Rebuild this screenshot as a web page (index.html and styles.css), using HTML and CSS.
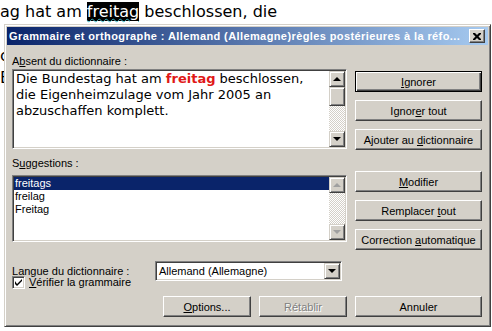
FILE: index.html
```html
<!DOCTYPE html>
<html lang="fr">
<head>
    <meta charset="UTF-8">
    <title>Grammaire et orthographe</title>
    <link rel="stylesheet" href="styles.css">
</head>
<body>
    <div class="doc">
        <p>ag hat am <span class="err">freitag</span> beschlossen, die</p>
        <div class="doc-rest">
            <p>&nbsp;</p>
            <p>c</p>
            <p>E</p>
        </div>
    </div>

    <div class="dialog">
        <div class="titlebar">
            <span class="title">Grammaire et orthographe : Allemand (Allemagne)règles postérieures à la réfo...</span>
            <span class="close">
                <svg width="8" height="7" viewBox="0 0 8 7"><path d="M0 0h2l2 2 2-2h2v1l-2.5 2.5 2.5 2.5v1h-2l-2-2-2 2h-2v-1l2.5-2.5-2.5-2.5z" fill="#000"/></svg>
            </span>
        </div>

        <div class="content">
            <div class="section first">
                <div class="left">
                    <div class="label">A<u>b</u>sent du dictionnaire :</div>
                    <div class="box sentence-box">
                        <div class="sentence">Die Bundestag hat am <b class="bad">freitag</b> beschlossen,<br>die Eigenheimzulage vom Jahr 2005 an<br>abzuschaffen komplett.</div>
                        <div class="scrollbar">
                            <div class="arrow up"></div>
                            <div class="thumb"></div>
                            <div class="track"></div>
                            <div class="arrow down"></div>
                        </div>
                    </div>
                </div>
                <div class="buttons">
                    <button class="btn default"><u>I</u>gnorer</button>
                    <button class="btn">Ignor<u>e</u>r tout</button>
                    <button class="btn">Ajouter au <u>d</u>ictionnaire</button>
                </div>
            </div>

            <div class="section second">
                <div class="left">
                    <div class="label">S<u>u</u>ggestions :</div>
                    <div class="box list-box">
                        <div class="list">
                            <div class="item selected">freitags</div>
                            <div class="item">freilag</div>
                            <div class="item">Freitag</div>
                        </div>
                        <div class="scrollbar">
                            <div class="arrow up off"></div>
                            <div class="track"></div>
                            <div class="arrow down off"></div>
                        </div>
                    </div>
                </div>
                <div class="buttons">
                    <button class="btn"><u>M</u>odifier</button>
                    <button class="btn">Remplacer <u>t</u>out</button>
                    <button class="btn">Correction <u>a</u>utomatique</button>
                </div>
            </div>

            <div class="lang-row">
                <span class="lang-label"><u>L</u>angue du dictionnaire :</span>
                <div class="select">
                    <span class="select-value">Allemand (Allemagne)</span>
                    <span class="drop"><span class="arrow down"></span></span>
                </div>
            </div>

            <div class="check-row">
                <span class="checkbox">
                    <svg width="7" height="7" viewBox="0 0 7 7"><path d="M0 2v3l2 2 5-5v-2h0l-5 5z" fill="#000"/></svg>
                </span>
                <span><u>V</u>érifier la grammaire</span>
            </div>

            <div class="footer">
                <button class="btn small"><u>O</u>ptions...</button>
                <button class="btn small" disabled>Rétablir</button>
                <button class="btn">Annuler</button>
            </div>
        </div>
    </div>
</body>
</html>
```

FILE: styles.css
```css
body {
    margin: 0;
    background: #fff;
    font-family: "DejaVu Sans", Verdana, sans-serif;
    overflow: hidden;
}
.doc {
    font-size: 16px;
    line-height: 22px;
    padding-top: 1px;
}
.doc p {
    margin: 0;
    white-space: nowrap;
}
.doc-rest {
    width: 4px;
    overflow: hidden;
}
.err {
    background: #000;
    color: #fff;
    text-decoration: underline wavy #3cb4c4;
    text-decoration-thickness: 1px;
}

/* dialog window */
.dialog {
    position: absolute;
    left: 4px;
    top: 24px;
    width: 487px;
    height: 303px;
    box-sizing: border-box;
    padding: 2px;
    background: #d4d0c8;
    border: 1px solid;
    border-color: #d4d0c8 #404040 #404040 #d4d0c8;
    box-shadow: inset 1px 1px #fff, inset -1px -1px #808080;
    font-family: "Liberation Sans", Arial, sans-serif;
    font-size: 11px;
    color: #000;
}
.titlebar {
    height: 18px;
    display: flex;
    align-items: center;
    justify-content: space-between;
    padding: 0 3px 0 2px;
    background: linear-gradient(to right, #0a246a, #a6caf0);
    color: #fff;
    font-weight: bold;
    letter-spacing: 0.4px;
    white-space: nowrap;
}
.close {
    width: 16px;
    height: 14px;
    box-sizing: border-box;
    display: flex;
    align-items: center;
    justify-content: center;
    background: #d4d0c8;
    border: 1px solid;
    border-color: #fff #404040 #404040 #fff;
    box-shadow: inset -1px -1px #808080;
}
.content {
    padding: 9px 6px 0 5px;
}
.section {
    display: flex;
    gap: 8px;
}
.second {
    margin-top: 6px;
}
.left {
    width: 335px;
}
.label {
    height: 14px;
    line-height: 14px;
    margin-bottom: 1px;
}
.second .label {
    margin-bottom: 5px;
}
.buttons {
    width: 127px;
    display: flex;
    flex-direction: column;
    gap: 8px;
    padding-top: 17px;
}
.second .buttons {
    padding-top: 15px;
}

/* buttons */
.btn {
    height: 21px;
    width: 127px;
    padding: 0;
    background: #d4d0c8;
    border: 1px solid;
    border-color: #fff #404040 #404040 #fff;
    box-shadow: inset -1px -1px #808080;
    font-family: inherit;
    font-size: 11px;
    font-weight: normal;
    color: #000;
}
.btn.default {
    border-color: #000;
    box-shadow: inset 1px 1px #fff, inset -1px -1px #404040, inset -2px -2px #808080;
}
.btn.small {
    width: 88px;
}
.btn:disabled {
    color: #808080;
    text-shadow: 1px 1px #fff;
}

/* sunken boxes */
.box {
    display: flex;
    box-sizing: border-box;
    background: #fff;
    border: 1px solid;
    border-color: #808080 #fff #fff #808080;
    box-shadow: inset 1px 1px #404040, inset -1px -1px #d4d0c8;
    padding: 1px;
}
.sentence-box {
    height: 80px;
}
.list-box {
    height: 67px;
}
.sentence {
    flex: 1;
    padding: 0 0 0 2px;
    font-family: "DejaVu Sans", Verdana, sans-serif;
    font-size: 13px;
    line-height: 16px;
    white-space: nowrap;
}
.bad {
    color: #e01818;
}
.list {
    flex: 1;
}
.item {
    height: 13px;
    line-height: 13px;
    padding-left: 1px;
}
.item.selected {
    background: #0a246a;
    color: #fff;
}

/* scrollbar */
.scrollbar {
    width: 16px;
    display: flex;
    flex-direction: column;
}
.track {
    flex: 1;
    background: repeating-conic-gradient(#d4d0c8 0 25%, #fff 0 50%) 0 0 / 2px 2px;
}
.arrow,
.thumb {
    height: 16px;
    box-sizing: border-box;
    background: #d4d0c8;
    border: 1px solid;
    border-color: #d4d0c8 #404040 #404040 #d4d0c8;
    box-shadow: inset 1px 1px #fff, inset -1px -1px #808080;
}
.thumb {
    height: 19px;
}
.arrow {
    display: flex;
    align-items: center;
    justify-content: center;
}
.arrow::after {
    content: "";
    border-left: 4px solid transparent;
    border-right: 4px solid transparent;
}
.arrow.up::after {
    border-bottom: 4px solid #000;
}
.arrow.down::after {
    border-top: 4px solid #000;
}
.arrow.off.up::after {
    border-bottom-color: #a0a0a0;
}
.arrow.off.down::after {
    border-top-color: #a0a0a0;
}

/* bottom area */
.lang-row {
    display: flex;
    align-items: center;
    margin-top: 11px;
}
.lang-label {
    width: 143px;
}
.select {
    width: 187px;
    height: 20px;
    box-sizing: border-box;
    display: flex;
    align-items: center;
    background: #fff;
    border: 1px solid;
    border-color: #808080 #fff #fff #808080;
    box-shadow: inset 1px 1px #404040, inset -1px -1px #d4d0c8;
    padding: 1px;
}
.select-value {
    flex: 1;
    padding-left: 2px;
}
.drop {
    width: 16px;
    height: 16px;
    display: flex;
}
.drop .arrow {
    flex: 1;
    height: 16px;
}
.check-row {
    display: flex;
    align-items: center;
    gap: 4px;
    margin-top: -6px;
    height: 14px;
}
.checkbox {
    width: 13px;
    height: 13px;
    box-sizing: border-box;
    display: flex;
    align-items: center;
    justify-content: center;
    background: #fff;
    border: 1px solid;
    border-color: #808080 #fff #fff #808080;
    box-shadow: inset 1px 1px #404040, inset -1px -1px #d4d0c8;
}
.footer {
    display: flex;
    justify-content: flex-end;
    gap: 8px;
    margin-top: 7px;
}
```
